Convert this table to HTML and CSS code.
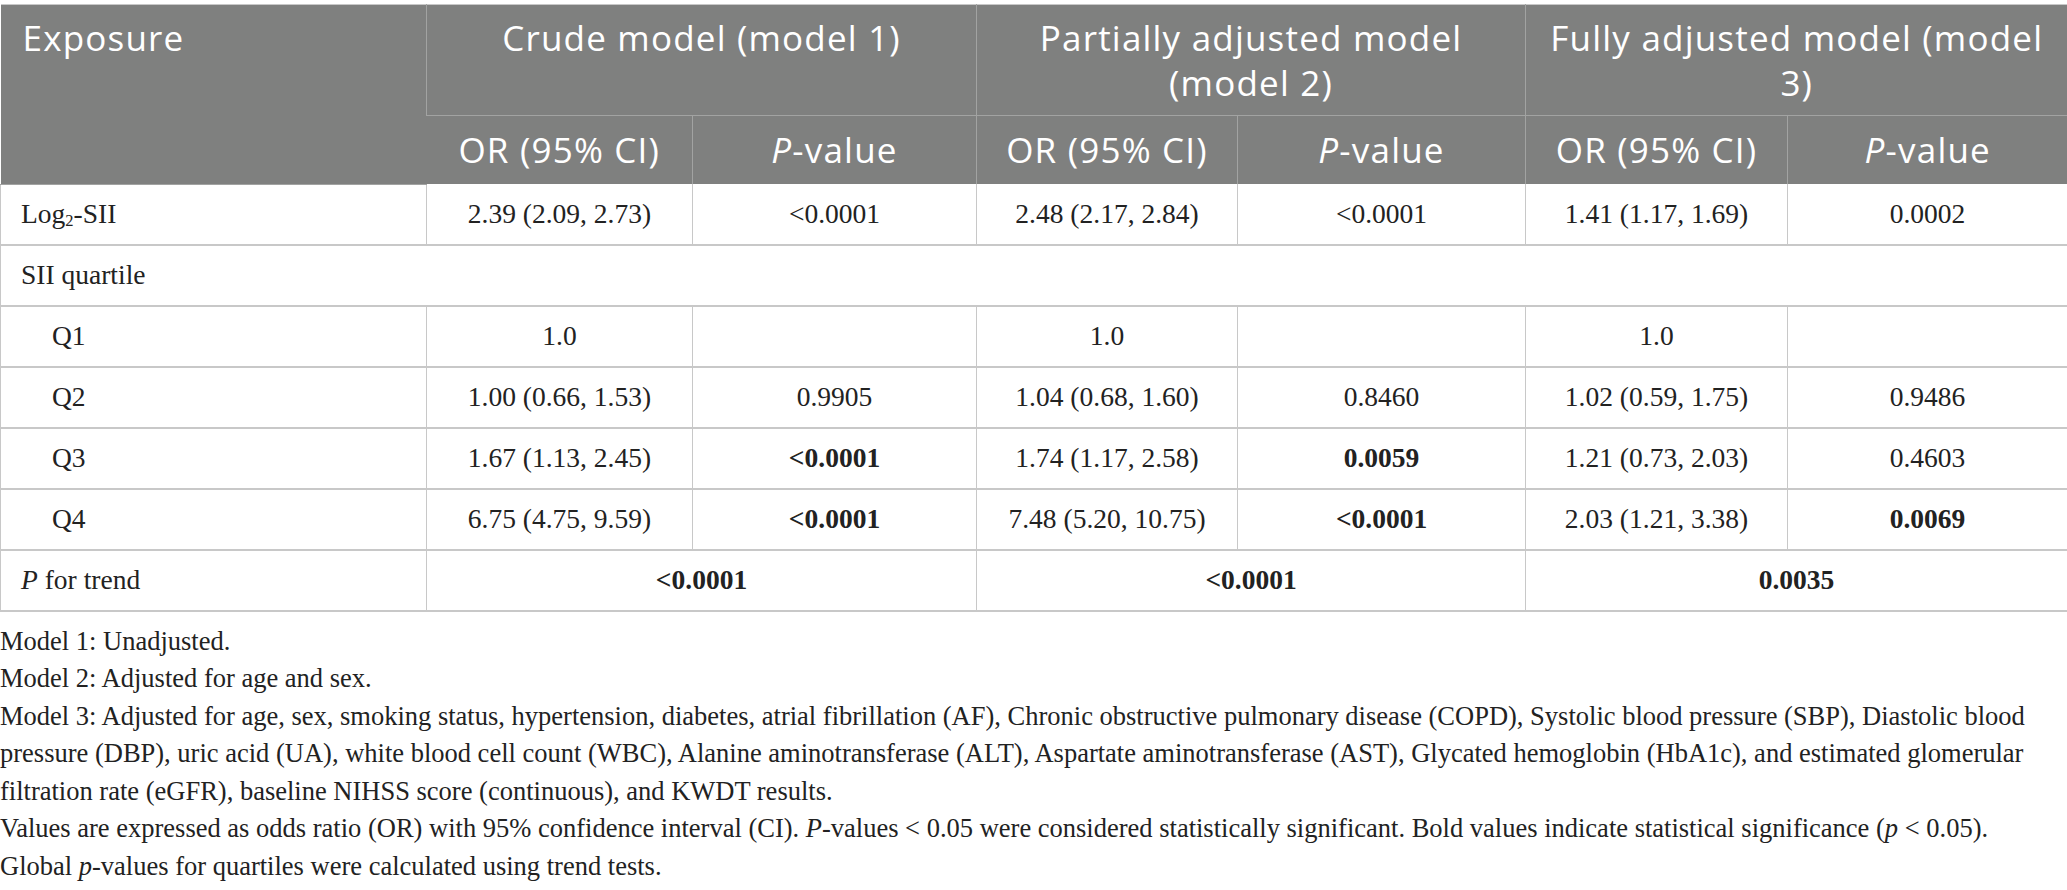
FILE: index.html
```html
<!DOCTYPE html>
<html lang="en">
<head>
    <meta charset="UTF-8">
    <meta name="viewport" content="width=device-width, initial-scale=1.0">
    <title>SII and outcome - logistic regression</title>
    <link rel="stylesheet" href="styles.css">
</head>
<body>

    <table class="results">
        <colgroup>
            <col class="c-exp">
            <col class="c-or1">
            <col class="c-p1">
            <col class="c-or2">
            <col class="c-p2">
            <col class="c-or3">
            <col class="c-p3">
        </colgroup>
        <thead>
            <tr class="head-top">
                <th class="exposure" rowspan="2">Exposure</th>
                <th colspan="2">Crude model (model 1)</th>
                <th colspan="2">Partially adjusted model (model 2)</th>
                <th colspan="2">Fully adjusted model (model 3)</th>
            </tr>
            <tr class="head-sub">
                <th>OR (95% CI)</th>
                <th><i>P</i>-value</th>
                <th>OR (95% CI)</th>
                <th><i>P</i>-value</th>
                <th>OR (95% CI)</th>
                <th><i>P</i>-value</th>
            </tr>
        </thead>
        <tbody>
            <tr>
                <td class="label">Log<sub>2</sub>-SII</td>
                <td>2.39 (2.09, 2.73)</td>
                <td>&lt;0.0001</td>
                <td>2.48 (2.17, 2.84)</td>
                <td>&lt;0.0001</td>
                <td>1.41 (1.17, 1.69)</td>
                <td>0.0002</td>
            </tr>
            <tr>
                <td class="label" colspan="7">SII quartile</td>
            </tr>
            <tr>
                <td class="label sub">Q1</td>
                <td>1.0</td>
                <td></td>
                <td>1.0</td>
                <td></td>
                <td>1.0</td>
                <td></td>
            </tr>
            <tr>
                <td class="label sub">Q2</td>
                <td>1.00 (0.66, 1.53)</td>
                <td>0.9905</td>
                <td>1.04 (0.68, 1.60)</td>
                <td>0.8460</td>
                <td>1.02 (0.59, 1.75)</td>
                <td>0.9486</td>
            </tr>
            <tr>
                <td class="label sub">Q3</td>
                <td>1.67 (1.13, 2.45)</td>
                <td><b>&lt;0.0001</b></td>
                <td>1.74 (1.17, 2.58)</td>
                <td><b>0.0059</b></td>
                <td>1.21 (0.73, 2.03)</td>
                <td>0.4603</td>
            </tr>
            <tr>
                <td class="label sub">Q4</td>
                <td>6.75 (4.75, 9.59)</td>
                <td><b>&lt;0.0001</b></td>
                <td>7.48 (5.20, 10.75)</td>
                <td><b>&lt;0.0001</b></td>
                <td>2.03 (1.21, 3.38)</td>
                <td><b>0.0069</b></td>
            </tr>
            <tr>
                <td class="label"><i>P</i> for trend</td>
                <td colspan="2"><b>&lt;0.0001</b></td>
                <td colspan="2"><b>&lt;0.0001</b></td>
                <td colspan="2"><b>0.0035</b></td>
            </tr>
        </tbody>
    </table>

    <div class="notes">
        <p>Model 1: Unadjusted.</p>
        <p>Model 2: Adjusted for age and sex.</p>
        <p>Model 3: Adjusted for age, sex, smoking status, hypertension, diabetes, atrial fibrillation (AF), Chronic obstructive pulmonary disease (COPD), Systolic blood pressure (SBP), Diastolic blood pressure (DBP), uric acid (UA), white blood cell count (WBC), Alanine aminotransferase (ALT), Aspartate aminotransferase (AST), Glycated hemoglobin (HbA1c), and estimated glomerular filtration rate (eGFR), baseline NIHSS score (continuous), and KWDT results.</p>
        <p>Values are expressed as odds ratio (OR) with 95% confidence interval (CI). <i>P</i>-values &lt; 0.05 were considered statistically significant. Bold values indicate statistical significance (<i>p</i> &lt; 0.05).</p>
        <p>Global <i>p</i>-values for quartiles were calculated using trend tests.</p>
    </div>

</body>
</html>
```

FILE: styles.css
```css
body {
    margin: 0;
    padding-top: 4px;
    background-color: #fff;
    color: #222;
    font-family: "Liberation Serif", "Times New Roman", serif;
}

.results {
    width: 2067px;
    border-collapse: collapse;
    table-layout: fixed;
    border-top: 1px solid #c8c8c8;
}
.c-exp { width: 426px; }
.c-or1 { width: 266px; }
.c-p1  { width: 284px; }
.c-or2 { width: 261px; }
.c-p2  { width: 288px; }
.c-or3 { width: 262px; }
.c-p3  { width: 280px; }

th {
    background-color: #7f807f;
    color: #fff;
    font-family: "Open Sans", "Noto Sans", sans-serif;
    font-weight: 400;
    font-size: 35px;
    letter-spacing: 1.2px;
    line-height: 45px;
    text-align: center;
    vertical-align: top;
    border-left: 1px solid #a2a3a2;
    border-bottom: 1px solid #a2a3a2;
}
th:first-child {
    border-left: 0;
}
.head-top th {
    height: 90px;
    padding: 10px 22px 10px;
}
.head-sub th {
    height: 45px;
    padding: 11px 10px 12px;
    border-bottom: 0;
}
th.exposure {
    text-align: left;
}

td {
    height: 59px;
    padding: 0 10px;
    font-size: 27.5px;
    text-align: center;
    vertical-align: middle;
    border: 1px solid #c8c8c8;
    border-top: 0;
    border-bottom: 2px solid #c8c8c8;
}
td.label {
    text-align: left;
    padding-left: 20px;
}
td.sub {
    padding-left: 51px;
}
sub {
    font-size: 0.6em;
    vertical-align: -0.2em;
    line-height: 0;
}

.notes {
    margin-top: 11px;
    font-size: 26.5px;
    line-height: 37.5px;
}
.notes p {
    margin: 0;
}
```
